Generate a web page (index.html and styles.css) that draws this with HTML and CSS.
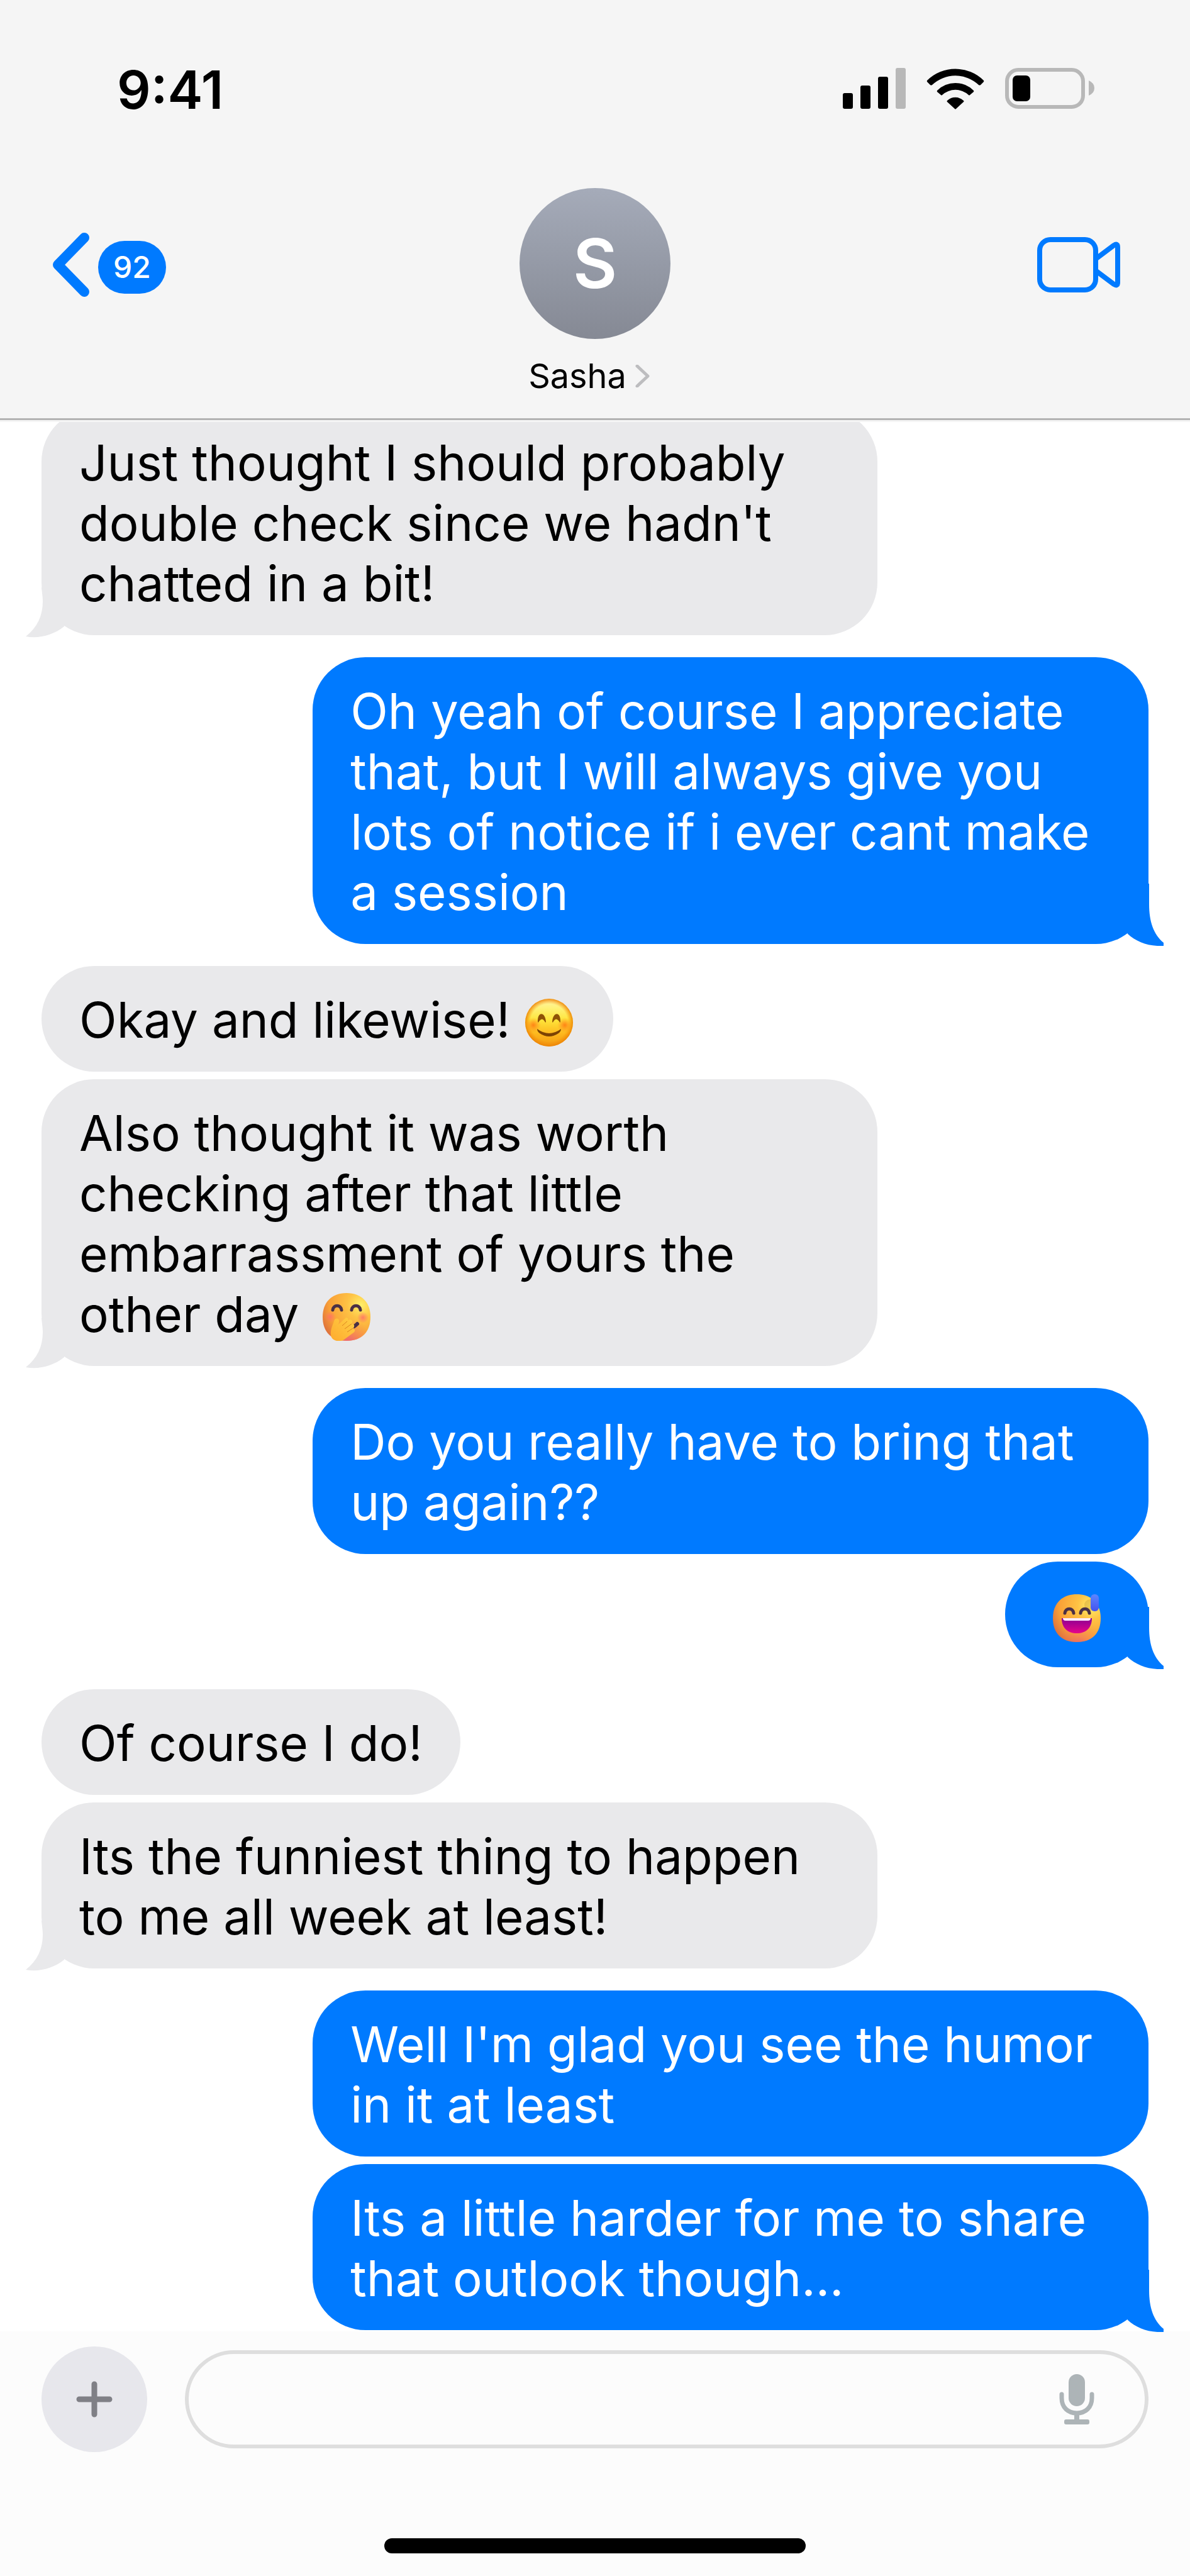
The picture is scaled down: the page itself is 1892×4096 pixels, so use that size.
FILE: index.html
```html
<!DOCTYPE html>
<html lang="en">
<head>
    <meta charset="UTF-8">
    <meta name="viewport" content="width=device-width, initial-scale=1.0">
    <title>Messages</title>
    <link rel="stylesheet" href="styles.css">
</head>
<body>
    <!-- Shared shapes -->
    <svg class="defs" width="0" height="0" aria-hidden="true">
        <symbol id="tail-left" viewBox="0 0 61 80">
            <path d="M25 0 C26 10 27 16 27 22 C27 45 18 64 0 78 C20 82 44 76 61 62 V0 Z"/>
        </symbol>
        <symbol id="tail-right" viewBox="0 0 64 99">
            <path d="M0 0 H41 V33 C41 60 48 81 64 94 V99 H54 C35 98 19 91 7 80 L0 60 Z"/>
        </symbol>
    </svg>

    <header class="header">
        <div class="status-bar">
            <span class="time">9:41</span>
            <div class="status-icons">
                <svg width="100" height="66" viewBox="0 0 100 66">
                    <rect x="0" y="40" width="16" height="25" rx="3"/>
                    <rect x="28" y="28" width="16" height="37" rx="3"/>
                    <rect x="56" y="14" width="16" height="51" rx="3"/>
                    <rect x="84" y="0" width="16" height="65" rx="3" fill="#b8b8b8"/>
                </svg>
                <svg width="92" height="66" viewBox="0 0 92 66">
                    <path d="M1 20 A64 64 0 0 1 91 20 Q91.500 21 91 22 L86 27 Q84.500 28 83 27 A54 54 0 0 0 9 27 Q7.500 28 6 27 L1 22 Q.5 21 1 20 Z"/>
                    <path d="M17 36 A41 41 0 0 1 75 36 Q75.500 37 75 38 L69 43 Q68 44 67 43 A31 31 0 0 0 25 43 Q24 44 23 43 L17 38 Q16.500 37 17 36 Z"/>
                    <path d="M33 52 A19 19 0 0 1 59 52 Q60 53 59 54 L47 65 Q46 66 45 65 L33 54 Q32 53 33 52 Z"/>
                </svg>
                <svg width="142" height="66" viewBox="0 0 142 66">
                    <rect x="3" y="3" width="121" height="59" rx="18" fill="none" stroke="#b8b8b8" stroke-width="6"/>
                    <rect x="12" y="12" width="28" height="41" rx="7"/>
                    <path d="M133 20 Q142 24 142 32 T133 44 Z" fill="#b8b8b8"/>
                </svg>
            </div>
        </div>

        <nav class="nav">
            <button class="back" aria-label="Back, 92 unread">
                <svg width="60" height="102" viewBox="0 0 60 102">
                    <path d="M51 8 L9 51 L51 94" fill="none" stroke="#007aff" stroke-width="16" stroke-linecap="round" stroke-linejoin="round"/>
                </svg>
                <span class="badge">92</span>
            </button>
            <a class="contact" href="#">
                <span class="avatar">S</span>
                <span class="contact-name">Sasha<svg width="56" height="36" viewBox="0 0 56 36">
                    <path d="M17 2 L34 18 L17 34" fill="none" stroke="#bdbdbf" stroke-width="5" stroke-linecap="round" stroke-linejoin="round"/>
                </svg></span>
            </a>
            <button class="video" aria-label="Video call">
                <svg width="132" height="88" viewBox="0 0 132 88">
                    <g fill="none" stroke="#007aff" stroke-width="8" stroke-linejoin="round">
                        <rect x="4" y="4" width="89" height="80" rx="17"/>
                        <path d="M94 34 L122 13 Q128 9 128 16 V72 Q128 79 122 75 L94 54"/>
                    </g>
                </svg>
            </button>
        </nav>
    </header>

    <main class="chat">
        <div class="group received">
            <p class="bubble">Just thought I should probably double check since we hadn't chatted in a bit!
                <svg class="tail"><use href="#tail-left"/></svg></p>
        </div>

        <div class="group sent">
            <p class="bubble">Oh yeah of course I appreciate that, but I will always give you lots of notice if i ever cant make a session
                <svg class="tail"><use href="#tail-right"/></svg></p>
        </div>

        <div class="group received">
            <p class="bubble">Okay and likewise! <svg class="emoji" viewBox="0 0 76 76" role="img" aria-label="Smiling face with smiling eyes">
                    <defs>
                        <linearGradient id="glossy" x1="0" y1="0" x2="0" y2="1">
                            <stop offset="0" stop-color="#fff4a8"/>
                            <stop offset=".2" stop-color="#fff176"/>
                            <stop offset=".45" stop-color="#fee43a"/>
                            <stop offset=".75" stop-color="#fdb51c"/>
                            <stop offset="1" stop-color="#f09a14"/>
                        </linearGradient>
                        <radialGradient id="rim" cx=".5" cy=".5" r=".5">
                            <stop offset=".78" stop-color="#f78b08" stop-opacity="0"/>
                            <stop offset="1" stop-color="#ec8205" stop-opacity=".9"/>
                        </radialGradient>
                        <radialGradient id="cheek">
                            <stop offset="0" stop-color="#ff7a12" stop-opacity=".9"/>
                            <stop offset="1" stop-color="#ff8c1a" stop-opacity="0"/>
                        </radialGradient>
                    </defs>
                    <circle cx="38" cy="38" r="38" fill="url(#glossy)"/>
                    <circle cx="38" cy="38" r="38" fill="url(#rim)"/>
                    <circle cx="13" cy="42" r="12" fill="url(#cheek)"/>
                    <circle cx="63" cy="42" r="12" fill="url(#cheek)"/>
                    <path d="M20 37 C19 20 32 20 33 37 Q32 39 31 36 Q27 29 22 36 Q21 39 20 37 Z" fill="#8f5206"/>
                    <path d="M43 37 C44 20 57 20 56 37 Q55 39 54 36 Q49 29 45 36 Q44 39 43 37 Z" fill="#8f5206"/>
                    <path d="M19 48 Q38 62 57 48 Q57 52 53 55 Q38 65 23 55 Q19 52 19 48 Z" fill="#7c4304"/>
                </svg></p>
            <p class="bubble">Also thought it was worth checking after that little embarrassment of yours the other day <svg class="emoji wide" viewBox="0 0 76 76" role="img" aria-label="Face with hand over mouth">
                    <defs>
                        <radialGradient id="soft" cx=".8" cy=".25" r=".95">
                            <stop offset="0" stop-color="#fff06a"/>
                            <stop offset=".3" stop-color="#fec244"/>
                            <stop offset=".7" stop-color="#f9a137"/>
                            <stop offset="1" stop-color="#d9683c"/>
                        </radialGradient>
                        <radialGradient id="pink-base" cx=".55" cy="1.05" r=".5">
                            <stop offset="0" stop-color="#f0607c"/>
                            <stop offset="1" stop-color="#f58a4c" stop-opacity="0"/>
                        </radialGradient>
                        <radialGradient id="blush">
                            <stop offset="0" stop-color="#ff7068" stop-opacity=".85"/>
                            <stop offset="1" stop-color="#ff7068" stop-opacity="0"/>
                        </radialGradient>
                        <linearGradient id="hand" x1="1" y1="0" x2="0" y2="1">
                            <stop offset="0" stop-color="#ffd044"/>
                            <stop offset="1" stop-color="#feaa2e"/>
                        </linearGradient>
                    </defs>
                    <path d="M38 0 C62 0 76 15 76 38 C76 62 62 76 38 76 C14 76 0 62 0 38 C0 15 14 0 38 0 Z" fill="url(#soft)"/>
                    <path d="M38 0 C62 0 76 15 76 38 C76 62 62 76 38 76 C14 76 0 62 0 38 C0 15 14 0 38 0 Z" fill="url(#pink-base)"/>
                    <circle cx="12" cy="38" r="9" fill="url(#blush)"/>
                    <circle cx="64" cy="39" r="9" fill="url(#blush)"/>
                    <path d="M16 27 C17 18 29 18 30 27 M46 27 C47 18 59 18 60 27" fill="none" stroke="#4a3046" stroke-width="5" stroke-linecap="round"/>
                    <path d="M50 53 Q52 52 55 49" fill="none" stroke="#4a3046" stroke-width="6" stroke-linecap="round"/>
                    <path d="M13 67 C12 58 16 51 18 45 C19 39 27 39 26 46 L25 50 L35 41 C38 37 43 41 39 45 L40 44 C44 40 50 44 46 49 C50 48 52 53 48 57 C52 57 52 61 49 63 L34 74 C27 79 14 76 13 67 Z" fill="url(#hand)"/>
                    <path d="M31 52 L39 45 M35 57 L46 49 M39 62 L48 56" fill="none" stroke="#dc8420" stroke-width="1"/>
                </svg>
                <svg class="tail"><use href="#tail-left"/></svg></p>
        </div>

        <div class="group sent">
            <p class="bubble">Do you really have to bring that up again??</p>
            <p class="bubble"><svg class="emoji wide" viewBox="0 0 76 76" role="img" aria-label="Grinning face with sweat">
                    <defs>
                        <linearGradient id="mouth" x1="0" y1="0" x2="0" y2="1">
                            <stop offset="0" stop-color="#8a0094"/>
                            <stop offset="1" stop-color="#e6058a"/>
                        </linearGradient>
                        <linearGradient id="drop" x1="0" y1="0" x2="0" y2="1">
                            <stop offset="0" stop-color="#5b86ff"/>
                            <stop offset="1" stop-color="#4652ee"/>
                        </linearGradient>
                    </defs>
                    <path d="M38 0 C62 0 76 15 76 38 C76 62 62 76 38 76 C14 76 0 62 0 38 C0 15 14 0 38 0 Z" fill="url(#soft)"/>
                    <path d="M38 0 C62 0 76 15 76 38 C76 62 62 76 38 76 C14 76 0 62 0 38 C0 15 14 0 38 0 Z" fill="url(#pink-base)" opacity=".7"/>
                    <circle cx="59" cy="17" r="9" fill="#b8802a" opacity=".3"/>
                    <path d="M19 30 C20 21 32 21 33 30 M44 30 C45 21 57 21 58 30" fill="none" stroke="#4a3046" stroke-width="5" stroke-linecap="round"/>
                    <path d="M14 38 H62 C62 54 52 62 38 62 C24 62 14 54 14 38 Z" fill="url(#mouth)"/>
                    <path d="M16 38 H60 Q60 42 56 42 H20 Q16 42 16 38 Z" fill="#fdeaff"/>
                    <rect x="60" y="0" width="13" height="27" rx="6" fill="url(#drop)"/>
                </svg>
                <svg class="tail"><use href="#tail-right"/></svg></p>
        </div>

        <div class="group received">
            <p class="bubble">Of course I do!</p>
            <p class="bubble">Its the funniest thing to happen to me all week at least!
                <svg class="tail"><use href="#tail-left"/></svg></p>
        </div>

        <div class="group sent">
            <p class="bubble">Well I'm glad you see the humor in it at least</p>
            <p class="bubble">Its a little harder for me to share that outlook though...
                <svg class="tail"><use href="#tail-right"/></svg></p>
        </div>
    </main>

    <footer class="footer">
        <form class="composer">
            <button type="button" class="add" aria-label="Add attachment">
                <svg width="58" height="58" viewBox="0 0 58 58">
                    <path d="M29 5 V53 M5 29 H53" fill="none" stroke="#808086" stroke-width="9" stroke-linecap="round"/>
                </svg>
            </button>
            <div class="field">
                <input type="text" id="message" aria-label="Message">
                <button type="button" class="mic" aria-label="Dictate">
                    <svg width="56" height="80" viewBox="0 0 56 80">
                        <g fill="#adb4b7">
                            <rect x="15" y="0" width="26" height="51" rx="13"/>
                            <rect x="24" y="63" width="8" height="12"/>
                            <rect x="8" y="72" width="40" height="8" rx="3"/>
                        </g>
                        <path d="M4 32 V38 C4 53 14 62 28 62 C42 62 52 53 52 38 V32" fill="none" stroke="#adb4b7" stroke-width="7" stroke-linecap="round"/>
                    </svg>
                </button>
            </div>
        </form>
        <div class="home-bar"></div>
    </footer>
</body>
</html>
```

FILE: styles.css
```css
* {
    box-sizing: border-box;
}

body {
    display: flex;
    flex-direction: column;
    min-height: 100vh;
    margin: 0;
    background-color: #fff;
    color: #000;
    font-family: Inter, "Liberation Sans", sans-serif;
}

button {
    padding: 0;
    border: none;
    background: none;
    font-family: inherit;
    cursor: pointer;
}

svg {
    display: block;
}

.defs {
    position: absolute;
}

/* Header */
.header {
    position: relative;
    z-index: 1;
    padding-bottom: 3px;
    background-color: #f5f5f5;
}

.status-bar {
    display: flex;
    justify-content: space-between;
    align-items: center;
    height: 282px;
    padding: 0 152px 0 186px;
}

.time {
    padding-top: 4px;
    font-size: 84px;
    line-height: 96px;
    font-weight: 600;
}

.status-icons {
    display: flex;
    gap: 33px;
}

.nav {
    display: grid;
    grid-template-columns: 1fr auto 1fr;
    padding: 17px 0 34px;
    border-bottom: 3px solid #b3b3b3;
}

.back {
    display: flex;
    align-items: center;
    justify-self: start;
    gap: 13px;
    height: 244px;
    margin-left: 83px;
}

.badge {
    min-width: 108px;
    margin-top: 8px;
    padding: 0 24px;
    border-radius: 42px;
    background-color: #007aff;
    color: #fff;
    font-size: 48px;
    line-height: 84px;
    font-weight: 500;
}

.contact {
    color: inherit;
    text-decoration: none;
}

.avatar {
    display: block;
    width: 240px;
    margin: 0 auto 26px;
    border-radius: 50%;
    background: linear-gradient(#a5abb9, #858994);
    color: #fff;
    font-size: 108px;
    line-height: 240px;
    font-weight: 600;
    text-align: center;
}

.contact-name {
    display: flex;
    align-items: center;
    justify-content: center;
    font-size: 54px;
    line-height: 66px;
}

.video {
    display: flex;
    align-items: center;
    justify-self: end;
    height: 244px;
    margin-right: 111px;
}

/* Messages */
.chat {
    display: flex;
    flex: 1;
    flex-direction: column;
    gap: 35px;
    margin-top: -21px;
    padding: 0 66px 2px;
}

.group {
    display: flex;
    flex-direction: column;
    gap: 12px;
}

.received {
    align-items: flex-start;
}

.sent {
    align-items: flex-end;
}

.bubble {
    position: relative;
    max-width: 75.5%;
    margin: 0;
    padding: 38px 60px 34px;
    border-radius: 84px;
    font-size: 78px;
    line-height: 96px;
}

.received .bubble {
    background-color: #e9e9eb;
}

.sent .bubble {
    background-color: #007aff;
    color: #fff;
}

/* Speech tail on the last bubble of a group */
.tail {
    position: absolute;
}

.received .tail {
    left: -25px;
    bottom: -4px;
    width: 61px;
    height: 80px;
    fill: #e9e9eb;
}

.sent .tail {
    right: -24px;
    bottom: -3px;
    width: 64px;
    height: 99px;
    fill: #007aff;
}

.emoji {
    display: inline-block;
    width: 76px;
    height: 76px;
    margin: 0 4px 0 2px;
    vertical-align: -14px;
}

.emoji.wide {
    margin: 0 16px;
}

/* Composer */
.footer {
    padding: 24px 66px 36px;
    background-color: #fcfcfc;
}

.composer {
    display: flex;
    align-items: center;
    gap: 60px;
}

.add {
    display: flex;
    align-items: center;
    justify-content: center;
    width: 168px;
    height: 168px;
    border-radius: 50%;
    background-color: #e7e7ec;
}

.field {
    display: flex;
    flex: 1;
    align-items: center;
    height: 156px;
    padding: 0 80px 0 54px;
    border: 6px solid #dedede;
    border-radius: 78px;
}

.field input {
    flex: 1;
    min-width: 0;
    border: none;
    outline: none;
    background: none;
    font-family: inherit;
    font-size: 78px;
    line-height: 96px;
}

.home-bar {
    width: 40%;
    max-width: 670px;
    height: 24px;
    margin: 137px auto 0;
    border-radius: 12px;
    background-color: #000;
}
```
